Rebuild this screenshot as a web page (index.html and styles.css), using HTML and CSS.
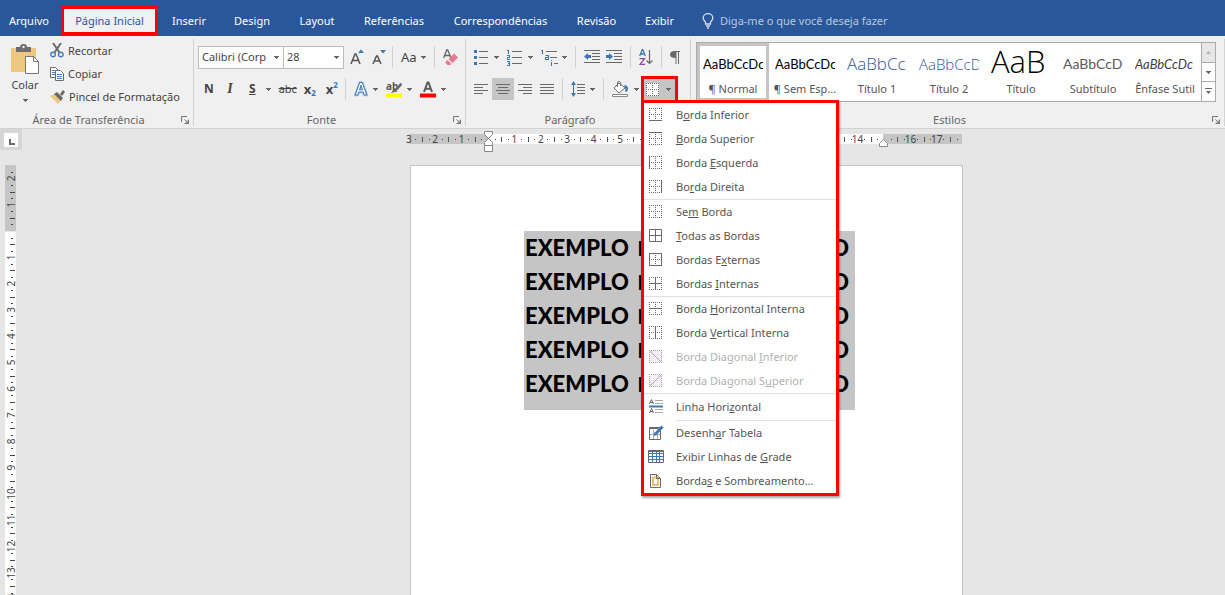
FILE: index.html
```html
<!DOCTYPE html>
<html lang="pt-BR">
<head>
<meta charset="utf-8">
<title>Documento</title>
<link rel="stylesheet" href="styles.css">
</head>
<body>
<svg class="defs" aria-hidden="true">
  <symbol id="caret" viewBox="0 0 5 3"><path d="M0 0h5v1h-1v1h-1v1h-1v-1h-1v-1h-1z"/></symbol>
  <symbol id="launcher" viewBox="0 0 9 9"><path d="M.5 6V.5H6M3.500 3.500l3 3" fill="none" stroke="#777"/><path d="M8 3v5H3l1.500-1.500h2V4.500z" fill="#777"/></symbol>
  <symbol id="dots" viewBox="0 0 13 13"><path d="M0 .5h13M0 6.500h13M0 12.500h13M.5 0v13M6.500 0v13M12.500 0v13" fill="none" stroke="#6a6a6a" stroke-dasharray="1 1"/></symbol>
  <symbol id="dotframe" viewBox="0 0 13 13"><path d="M0 0h13v13H0z" fill="#f5eef5" stroke="none"/><path d="M0 .5h13M0 12.500h13M.5 0v13M12.500 0v13" fill="none" stroke="#a8a0a8" stroke-dasharray="1 1"/></symbol>
</svg>

<nav class="tabs">
  <button class="tab file">Arquivo</button>
  <button class="tab active">Página Inicial</button>
  <button class="tab t-inserir">Inserir</button>
  <button class="tab t-design">Design</button>
  <button class="tab t-layout">Layout</button>
  <button class="tab t-ref">Referências</button>
  <button class="tab t-corr">Correspondências</button>
  <button class="tab t-rev">Revisão</button>
  <button class="tab t-exibir">Exibir</button>
  <label class="tell">
    <svg width="12" height="16" viewBox="0 0 12 16" fill="none" stroke="#d5deeb" stroke-width="1.300"><path d="M3.500 11V9.500C3.500 8.500 1.200 7.500 1.200 5a4.800 4.300 0 0 1 9.600 0c0 2.500-2.300 3.500-2.300 4.500V11zM4 13h4M5 15h2"/></svg>
    <input type="text" placeholder="Diga-me o que você deseja fazer" aria-label="Diga-me o que você deseja fazer">
  </label>
</nav>

<header class="ribbon">
  <section class="group clipboard">
    <div class="body">
      <button class="paste">
        <svg width="29" height="31" viewBox="0 0 29 31"><path d="M0 4h25v24H0z" fill="#edc87e"/><path d="M5 3h4q0-3 3.500-3T16 3h4v5H5z" fill="#6d6d6d"/><circle cx="12.500" cy="3" r="1.200" fill="#eee"/><path d="M14.500 12.500h8l5 5v12h-13z" fill="#fff" stroke="#777"/><path d="M22.500 12.500v5h5" fill="none" stroke="#777"/></svg>
        <span>Colar</span>
        <svg class="caret"><use href="#caret"/></svg>
      </button>
      <div class="cliplist">
        <button class="cmd"><svg width="14" height="15" viewBox="0 0 14 15" fill="none"><path d="M3 0l6.500 9.500M11 0L4.500 9.500" stroke="#6a6a6a" stroke-width="2"/><circle cx="3" cy="11.500" r="2.300" stroke="#4a7eb5" stroke-width="1.400"/><circle cx="10.800" cy="11.500" r="2.300" stroke="#4a7eb5" stroke-width="1.400"/></svg>Recortar</button>
        <button class="cmd"><svg width="14" height="14" viewBox="0 0 14 14"><path d="M.5.5h5l3 3v7h-8z" fill="#fff" stroke="#6a6a6a"/><path d="M2 3.500h3M2 5.500h3M2 7.500h3" stroke="#4a7eb5"/><path d="M5.500 3.500h5l3 3v7h-8z" fill="#fff" stroke="#6a6a6a"/><path d="M7 7.500h5M7 9.500h5M7 11.500h5" stroke="#4a7eb5"/></svg>Copiar</button>
        <button class="cmd"><svg width="15" height="14" viewBox="0 0 15 14"><path d="M0 6l5-2 6 6-3 4z" fill="#edc87e"/><path d="M4 4l3-2 6 6-2 3z" fill="#6a6a6a"/><path d="M10 4l3-4 2 2-3 4z" fill="#6a6a6a"/></svg>Pincel de Formatação</button>
      </div>
    </div>
    <footer><span>Área de Transferência</span><button class="launch" aria-label="Abrir Área de Transferência"><svg><use href="#launcher"/></svg></button></footer>
  </section>

  <section class="group font">
    <div class="body rows">
      <div class="row">
        <button class="combo name"><span>Calibri (Corp</span><svg class="caret"><use href="#caret"/></svg></button>
        <button class="combo size"><span>28</span><svg class="caret"><use href="#caret"/></svg></button>
        <button class="ico grow" aria-label="Aumentar fonte"><svg width="14" height="16" viewBox="0 0 14 16"><path d="M1 15L5 5h1l4 10M2.500 11.500h6" fill="none" stroke="#555" stroke-width="1.500"/><path d="M8 4l3-3.500L14 4z" fill="#3e78b4"/></svg></button>
        <button class="ico shrink" aria-label="Diminuir fonte"><svg width="14" height="16" viewBox="0 0 14 16"><path d="M1 15L4.500 7h1L9 15M2.500 12h5" fill="none" stroke="#555" stroke-width="1.500"/><path d="M8 1l3 3.500L14 1z" fill="#3e78b4"/></svg></button>
        <i class="rule"></i>
        <button class="ico case"><span>Aa</span><svg class="caret"><use href="#caret"/></svg></button>
        <i class="rule"></i>
        <button class="ico" aria-label="Limpar formatação"><svg width="15" height="16" viewBox="0 0 15 16"><path d="M.7 9L3.700 1h1L8 9M2 6.500h5" fill="none" stroke="#666" stroke-width="1.300"/><path d="M5.500 10L11 4.500l4 4L9.500 14z" fill="#e8798e"/><path d="M4.500 11l4 4-1 1H4.500L2 13.500z" fill="#e8798e"/></svg></button>
      </div>
      <div class="row second">
        <button class="ico bold">N</button>
        <button class="ico ital">I</button>
        <button class="ico under"><u>S</u><svg class="caret"><use href="#caret"/></svg></button>
        <button class="ico strike"><s>abc</s></button>
        <button class="ico bold scr">x<sub>2</sub></button>
        <button class="ico bold scr">x<sup>2</sup></button>
        <i class="rule"></i>
        <button class="ico fx" aria-label="Efeitos de texto"><svg width="14" height="16" viewBox="0 0 14 16"><path d="M1.200 14L5.700 1.500h2.600L12.800 14h-2.600l-1-3H4.800l-1 3zM5.500 8.800h3L7 4.300z" fill="#fff" stroke="#9fc3e8" stroke-width="2.400"/><path d="M1.200 14L5.700 1.500h2.600L12.800 14h-2.600l-1-3H4.800l-1 3zM5.500 8.800h3L7 4.300z" fill="#fff" stroke="#3e78b4"/></svg><svg class="caret"><use href="#caret"/></svg></button>
        <button class="ico mark" aria-label="Realce"><svg width="16" height="17" viewBox="0 0 16 17"><path d="M0 12.500h16v4H0z" fill="#ff0"/><text x="0" y="9" class="abtext">ab</text><path d="M15.500 2.500l-6 7" stroke="#6a6a6a" stroke-width="2.600"/><path d="M8 7.500l3.500 3L5 12z" fill="#6a6a6a"/></svg><svg class="caret"><use href="#caret"/></svg></button>
        <button class="ico color" aria-label="Cor da fonte"><svg width="16" height="17" viewBox="0 0 16 17"><path d="M0 12.500h16v4H0z" fill="red"/><path d="M4 11L7.500 1.500h1L12 11M5.500 7.800h5" fill="none" stroke="#5a5a5a" stroke-width="2"/></svg><svg class="caret"><use href="#caret"/></svg></button>
      </div>
    </div>
    <footer><span>Fonte</span><button class="launch" aria-label="Abrir Fonte"><svg><use href="#launcher"/></svg></button></footer>
  </section>

  <section class="group para">
    <div class="body rows">
      <div class="row lists">
        <button class="ico" aria-label="Marcadores"><svg width="14" height="15" viewBox="0 0 14 15"><path d="M0 0h3v3H0zM0 6h3v3H0zM0 12h3v3H0z" fill="#3e78b4"/><path d="M5 1.500h9M5 7.500h9M5 13.500h9" stroke="#6a6a6a"/></svg><svg class="caret"><use href="#caret"/></svg></button>
        <button class="ico" aria-label="Numeração"><svg width="15" height="17" viewBox="0 0 15 17"><path d="M0 1.500h1.500V5M0 6.500h2.500v2H.5v2H3M0 12.500h2.500v4H0M1 14.500h1.500" fill="none" stroke="#3e78b4" stroke-width="1.100"/><path d="M5 2.500h10M5 8.500h10M5 14.500h10" stroke="#6a6a6a"/></svg><svg class="caret"><use href="#caret"/></svg></button>
        <button class="ico multi" aria-label="Lista de vários níveis"><svg width="17" height="17" viewBox="0 0 17 17"><path d="M0 1.500h1.500V5M4.500 6.500h3v4h-3v-2h3M10.500 11v1M10.500 13v4" fill="none" stroke="#3e78b4" stroke-width="1.100"/><path d="M5 2.500h11M9 8.500h7M13 14.500h4" stroke="#6a6a6a"/></svg><svg class="caret"><use href="#caret"/></svg></button>
        <i class="rule"></i>
        <span class="indents">
          <button class="ico" aria-label="Diminuir recuo"><svg width="16" height="14" viewBox="0 0 16 14"><path d="M0 .5h16M8 3.500h8M8 6.500h8M8 9.500h8M0 12.500h16" stroke="#6a6a6a"/><path d="M4 3v2h3v3H4v2L0 6.500z" fill="#3e78b4"/></svg></button>
          <button class="ico" aria-label="Aumentar recuo"><svg width="16" height="14" viewBox="0 0 16 14"><path d="M0 .5h16M8 3.500h8M8 6.500h8M8 9.500h8M0 12.500h16" stroke="#6a6a6a"/><path d="M3 3v2H0v3h3v2l4-3.500z" fill="#3e78b4"/></svg></button>
        </span>
        <i class="rule"></i>
        <button class="ico" aria-label="Classificar"><svg width="14" height="17" viewBox="0 0 14 17" fill="none"><path d="M.7 7L3.200.7h.6L6.300 7M1.500 5h4" stroke="#3e78b4" stroke-width="1.300"/><path d="M.5 9.600h5L1 15.400h5" stroke="#8a48a8" stroke-width="1.300"/><path d="M10.500 1v13M7.500 11.500l3 3 3-3" stroke="#6a6a6a" stroke-width="1.200"/></svg></button>
        <i class="rule"></i>
        <button class="ico" aria-label="Mostrar tudo"><svg width="10" height="13" viewBox="0 0 10 13"><path d="M4.500 0H10v1H9v12H8V1H6.500v12h-1V7C2 7 0 6 0 3.500S2 0 4.500 0z" fill="#6a6a6a"/></svg></button>
      </div>
      <div class="row second aligns">
        <button class="ico al" aria-label="Esquerda"><svg width="14" height="11" viewBox="0 0 14 11"><path d="M0 .5h14M0 3.500h9M0 6.500h14M0 9.500h9" stroke="#6a6a6a"/></svg></button>
        <button class="ico al on" aria-label="Centralizar"><svg width="14" height="11" viewBox="0 0 14 11"><path d="M0 .5h14M2 3.500h10M0 6.500h14M2 9.500h10" stroke="#6a6a6a"/></svg></button>
        <button class="ico al" aria-label="Direita"><svg width="14" height="11" viewBox="0 0 14 11"><path d="M0 .5h14M5 3.500h9M0 6.500h14M5 9.500h9" stroke="#6a6a6a"/></svg></button>
        <button class="ico al" aria-label="Justificar"><svg width="14" height="11" viewBox="0 0 14 11"><path d="M0 .5h14M0 3.500h14M0 6.500h14M0 9.500h14" stroke="#6a6a6a"/></svg></button>
        <i class="rule"></i>
        <button class="ico spacing" aria-label="Espaçamento"><svg width="14" height="16" viewBox="0 0 14 16"><path d="M2.500 2v12" stroke="#3e78b4"/><path d="M0 4l2.500-4L5 4H3v2H2V4zM0 12l2.500 4L5 12H3v-2H2v2z" fill="#3e78b4"/><path d="M6 3.500h8M6 6.500h8M6 9.500h8M6 12.500h8" stroke="#6a6a6a"/></svg><svg class="caret"><use href="#caret"/></svg></button>
        <i class="rule"></i>
        <button class="ico shade" aria-label="Sombreamento"><svg width="17" height="16" viewBox="0 0 17 16"><path d="M.5 13.500h15v2H.500z" fill="#fff" stroke="#888"/><path d="M7 2l6 5-6 5-5-5z" fill="#fff" stroke="#6a6a6a"/><path d="M5.500 6V2q0-2 2-1.500t1 4.500" fill="none" stroke="#6a6a6a"/><path d="M12 4q4 0 4 3.500T13.500 11Q14 7 12 4z" fill="#3e78b4"/></svg><svg class="caret"><use href="#caret"/></svg></button>
        <div class="borders">
          <button class="bbtn" aria-label="Bordas"><svg width="13" height="13" class="bi"><rect width="13" height="13" fill="#fff"/><use href="#dots"/></svg><svg class="caret"><use href="#caret"/></svg></button>
          <div class="menu" role="menu">
            <button role="menuitem"><svg width="13" height="13"><use href="#dots"/><path d="M0 12.500h13"/></svg><span>B<u>o</u>rda Inferior</span></button>
            <button role="menuitem"><svg width="13" height="13"><use href="#dots"/><path d="M0 .5h13"/></svg><span><u>B</u>orda Superior</span></button>
            <button role="menuitem"><svg width="13" height="13"><use href="#dots"/><path d="M.5 0v13"/></svg><span>Borda <u>E</u>squerda</span></button>
            <button role="menuitem"><svg width="13" height="13"><use href="#dots"/><path d="M12.500 0v13"/></svg><span>Bo<u>r</u>da Direita</span></button>
            <hr>
            <button role="menuitem"><svg width="13" height="13"><use href="#dots"/></svg><span>Se<u>m</u> Borda</span></button>
            <button role="menuitem"><svg width="13" height="13"><path d="M.5.5h12v12H.5zM6.500 0v13M0 6.500h13"/></svg><span><u>T</u>odas as Bordas</span></button>
            <button role="menuitem"><svg width="13" height="13"><use href="#dots"/><path d="M.5.5h12v12H.5z"/></svg><span>Bordas E<u>x</u>ternas</span></button>
            <button role="menuitem"><svg width="13" height="13"><use href="#dots"/><path d="M6.500 0v13M0 6.500h13"/></svg><span>Bordas <u>I</u>nternas</span></button>
            <hr>
            <button role="menuitem"><svg width="13" height="13"><use href="#dots"/><path d="M0 6.500h13"/></svg><span>Borda <u>H</u>orizontal Interna</span></button>
            <button role="menuitem"><svg width="13" height="13"><use href="#dots"/><path d="M6.500 0v13"/></svg><span>Borda <u>V</u>ertical Interna</span></button>
            <button role="menuitem" disabled><svg width="13" height="13"><use href="#dotframe"/><path d="M1 1l11 11"/></svg><span>Borda Diagonal <u>I</u>nferior</span></button>
            <button role="menuitem" disabled><svg width="13" height="13"><use href="#dotframe"/><path d="M12 1L1 12"/></svg><span>Borda Diagonal S<u>u</u>perior</span></button>
            <hr>
            <button role="menuitem" class="line"><svg width="14" height="15" viewBox="0 0 14 15"><path d="M6 1.500h8M6 4.500h8M6 10.500h8M6 13.500h8" class="pale"/><path d="M.5 5L2.500.5 4.500 5M1 3.500h3M.5 14l2-4.500 2 4.500M1 12.500h3"/><path d="M0 7.500h14" class="blue2"/></svg><span>Linha Hori<u>z</u>ontal</span></button>
            <hr class="inset">
            <button role="menuitem"><svg width="15" height="15" viewBox="0 0 15 15"><path d="M.5 2.500h11v12H.5z" fill="#fff"/><path d="M4.500 5v9M1 9.500h10M8.500 5v9" class="pale"/><path d="M.5 3h9" class="gray2"/><path d="M13.500 1.500L7 8.500" class="blue3"/><path d="M4.500 11l1-4 3 3z" class="fillb"/></svg><span>Desenh<u>a</u>r Tabela</span></button>
            <button role="menuitem" class="wide"><svg width="16" height="13" viewBox="0 0 16 13"><path d="M1 3.500h14M1 6.500h14M1 9.500h14M4.500 2v10M8.500 2v10M11.500 2v10" class="blue"/><path d="M.5.5h15v12H.5zM0 1.500h16"/></svg><span>Exibir Linhas de <u>G</u>rade</span></button>
            <button role="menuitem"><svg width="13" height="14" viewBox="0 0 13 14"><path d="M1.500.5h6l4 4v9h-10z" fill="#fff"/><path d="M4 3.500h5v7.500H4z" class="tan"/><path d="M7.500.5v4h4"/></svg><span>Borda<u>s</u> e Sombreamento...</span></button>
          </div>
        </div>
      </div>
    </div>
    <footer><span>Parágrafo</span><button class="launch" aria-label="Abrir Parágrafo"><svg><use href="#launcher"/></svg></button></footer>
  </section>

  <section class="group styles">
    <div class="body gallery">
      <button class="style sel"><span class="pv">AaBbCcDc</span><span>¶ Normal</span></button>
      <button class="style"><span class="pv">AaBbCcDc</span><span>¶ Sem Esp...</span></button>
      <button class="style"><span class="pv h1">AaBbCc</span><span>Título 1</span></button>
      <button class="style"><span class="pv h2">AaBbCcD</span><span>Título 2</span></button>
      <button class="style"><span class="pv title">AaB</span><span>Título</span></button>
      <button class="style"><span class="pv subt">AaBbCcD</span><span>Subtítulo</span></button>
      <button class="style"><span class="pv emph">AaBbCcDc</span><span>Ênfase Sutil</span></button>
      <div class="scroll">
        <button class="off" aria-label="Acima"><svg class="caret up"><use href="#caret"/></svg></button>
        <button aria-label="Abaixo"><svg class="caret"><use href="#caret"/></svg></button>
        <button aria-label="Mais"><svg width="7" height="7" viewBox="0 0 7 7"><path d="M0 .5h7" stroke="#666"/><path d="M1 3h5L3.500 6z" fill="#666"/></svg></button>
      </div>
    </div>
    <footer><span>Estilos</span><button class="launch" aria-label="Abrir Estilos"><svg><use href="#launcher"/></svg></button></footer>
  </section>
</header>

<main class="work">
  <div class="corner"><button aria-label="Tabulação"><svg width="6" height="6" viewBox="0 0 6 6"><path d="M1 0v5h5" fill="none" stroke="#6a6a6a" stroke-width="2"/></svg></button></div>
  <div class="hruler"><svg id="hr" width="560" height="24"></svg></div>
  <div class="vruler"><svg id="vr" width="16" height="440"></svg></div>
  <article class="page">
    <div class="sel-text">
      <p>EXEMPLO <span>BORDAS NO</span> WORD</p>
      <p>EXEMPLO <span>BORDAS NO</span> WORD</p>
      <p>EXEMPLO <span>BORDAS NO</span> WORD</p>
      <p>EXEMPLO <span>BORDAS NO</span> WORD</p>
      <p>EXEMPLO <span>BORDAS NO</span> WORD</p>
    </div>
  </article>
</main>
<script src="rulers.js"></script>
</body>
</html>
```
FILE: styles.css
```css
* { box-sizing: border-box; }
body {
  margin: 0;
  min-height: 100vh;
  display: flex;
  flex-direction: column;
  background: #e6e6e6;
  color: #444;
  font: 11px/16px "Noto Sans", "Open Sans", sans-serif;
  overflow: hidden;
}
button, input { font: inherit; color: inherit; background: none; border: 0; padding: 0; margin: 0; }
button { white-space: nowrap; }
svg { display: block; flex: none; }
.defs { position: absolute; width: 0; height: 0; }
.caret { width: 5px; height: 3px; fill: #666; }

.tabs { display: flex; align-items: center; height: 36px; background: #2a579a; color: #fff; padding-top: 5px; }
.tab { height: 30px; text-align: center; }
.file { width: 58px; }
.active { width: 97px; height: 29px; margin-left: 3px; border: 3px solid #f00; background: #f0f0f0; color: #2a579a; }
.t-inserir { width: 62px; }
.t-design { width: 64px; }
.t-layout { width: 66px; }
.t-ref { width: 88px; }
.t-corr { width: 125px; }
.t-rev { width: 67px; }
.t-exibir { width: 59px; }
.tell { display: flex; align-items: center; gap: 6px; margin-left: 13px; flex: 1; }
.tell input { flex: 1; min-width: 0; }
.tell input::placeholder { color: #b9c8e0; opacity: 1; }

.ribbon { display: flex; height: 93px; background: #f0f0f0; border-bottom: 1px solid #d2d2d2; padding-top: 3px; }
.group { display: flex; flex-direction: column; border-right: 1px solid #d2d2d2; margin-bottom: 2px; flex: none; }
.body { flex: 1; display: flex; }
.group footer { display: flex; align-items: center; height: 12px; line-height: 12px; margin-top: auto; color: #666; }
.group footer span { flex: 1; text-align: center; padding-right: 4px; }
.launch { width: 9px; height: 9px; margin-right: 3px; }
.launch svg { width: 9px; height: 9px; }
.clipboard { width: 194px; }
.font { width: 272px; }
.para { width: 225px; }
.styles { flex: 1; min-width: 0; }

.paste { width: 50px; display: flex; flex-direction: column; align-items: center; justify-content: flex-start; padding-top: 5px; }
.paste span { margin-top: 2px; }
.paste .caret { margin-top: 6px; }
.cliplist { display: flex; flex-direction: column; }
.cmd { display: flex; align-items: center; gap: 4px; height: 23px; }

.rows { flex-direction: column; padding: 6px 4px 0 4px; gap: 9px; }
.row { display: flex; align-items: center; height: 24px; }
.second { height: 22px; }
.combo { display: flex; align-items: center; justify-content: space-between; flex: none; height: 23px; background: #fff; border: 1px solid #bbb; padding: 0 4px 0 3px; }
.name { width: 86px; }
.size { width: 60px; border-left: 0; }
.ico { display: flex; align-items: center; justify-content: center; gap: 6px; flex: none; }
.rule { width: 1px; height: 22px; background: #d2d2d2; flex: none; }
.grow { margin-left: 6px; }
.shrink { margin: 0 6px 0 8px; }
.case { margin: 0 8px; font-size: 13px; gap: 4px; }
.case + .rule { margin-right: 8px; }
.bold { font-weight: 700; width: 22px; font-size: 12px; }
.ital { font-family: "Liberation Serif", serif; font-style: italic; font-weight: 700; font-size: 14px; width: 20px; }
.under { font-weight: 700; font-size: 12px; margin: 0 8px 0 9px; gap: 10px; }
.strike { margin-right: 2px; }
.scr { gap: 0; font-size: 13px; }
.scr sub, .scr sup { font-size: 8px; color: #3e78b4; line-height: 8px; }
.scr sub { align-self: flex-end; }
.scr sup { align-self: flex-start; }
.scr + .rule { margin-left: 2px; }
.fx { margin: 0 8px; }
.fx, .mark, .color { gap: 5px; }
.mark { margin-right: 8px; }
.abtext { font: 700 10px "Noto Sans", sans-serif; fill: #555; }

.lists { gap: 8px; padding-left: 4px; }
.multi { gap: 4px; }
.indents { display: flex; gap: 6px; }
.al { width: 22px; height: 22px; }
.on { background: #c5c5c5; }
.aligns .rule { margin: 0 8px 0 4px; }
.spacing { gap: 5px; margin-right: 4px; }
.shade { gap: 5px; }
.borders { position: relative; margin-left: 2px; }
.bbtn { display: flex; align-items: center; gap: 7px; width: 37px; height: 27px; border: 3px solid #f00; background: #c5c5c5; padding-left: 2px; }
.menu {
  position: absolute; top: 24px; left: 0; z-index: 5;
  width: 198px; border: 3px solid #f00; background: #fff;
  box-shadow: 1px 2px 2px rgba(0,0,0,.35);
}
.menu button { display: grid; grid-template-columns: 27px 1fr; align-items: center; width: 100%; height: 24px; padding-left: 5px; color: #555; text-align: left; }
.menu svg { fill: none; stroke: #6a6a6a; }
.menu button:disabled { color: #b1b1b1; }
.menu button:disabled svg { stroke: #aaa; }
.menu hr { height: 1px; border: 0; margin: 0; background: #e1e1e1; }
.menu .line { height: 26px; }
.menu .inset { margin-left: 32px; }
.menu .wide { padding-left: 4px; grid-template-columns: 28px 1fr; }
.menu .pale { stroke: #aaa; }
.menu .blue { stroke: #3e78b4; }
.menu .blue2 { stroke: #3e78b4; stroke-width: 2; }
.menu .gray2 { stroke-width: 2; }
.menu .blue3 { stroke: #3e78b4; stroke-width: 3; }
.menu .fillb { fill: #3e78b4; stroke: none; }
.menu .tan { stroke: #e8bf70; stroke-width: 2; fill: #fff; }

.gallery { flex: none; height: 60px; margin: 3px 8px 0 5px; background: #fff; border: 1px solid #ababab; }
.style { flex: 1; min-width: 0; display: flex; flex-direction: column; justify-content: flex-end; align-items: center; padding: 0 5px 4px; color: #555; overflow: hidden; }
.style.sel { border: 3px solid #c5c5c5; padding: 0 2px 1px; }
.style .pv { width: 60px; height: 28px; line-height: 28px; overflow: hidden; color: #000; text-align: left; font-family: Lato, sans-serif; font-size: 13px; margin-bottom: 3px; }
.style .h1 { color: #2f5496; font: 300 17px/28px "Open Sans", sans-serif; }
.style .h2 { color: #2f5496; font: 300 15px/28px "Open Sans", sans-serif; }
.style .title { font: 300 31px/22px "Open Sans", sans-serif; }
.style .subt { color: #5a5a5a; font-size: 14px; }
.style .emph { color: #404040; font-style: italic; }
.scroll { width: 14px; display: flex; flex-direction: column; border-left: 1px solid #ababab; }
.scroll button { flex: 1; display: flex; align-items: center; justify-content: center; }
.scroll button + button { border-top: 1px solid #ababab; }
.scroll .off { background: #e6e6e6; }
.up { transform: rotate(180deg); fill: #bbb; }

.work { flex: 1; display: grid; grid-template-columns: 22px 1fr; grid-template-rows: 21px 1fr; min-height: 0; }
.corner { background: #d6d6d6; padding: 4px; }
.corner button { width: 14px; height: 14px; background: #fff; display: flex; align-items: center; justify-content: center; padding: 3px 0 0 1px; }
.hruler { padding-left: 384px; height: 36px; }
.vruler { padding-top: 15px; }
.page { width: 553px; margin: 15px 0 0 388px; background: #fff; border: 1px solid #c6c6c6; border-bottom: 0; padding: 65px 107px 0 113px; }
.sel-text { background: #c5c5c5; padding: 0 6px 9px 1px; }
.sel-text p { margin: 0; font: 900 22px/34px Lato, sans-serif; color: #000; white-space: nowrap; text-align-last: justify; }
.sel-text span { font-weight: 400; }
.tick { font: 10px "Noto Sans", sans-serif; fill: #444; text-anchor: middle; }
```
FILE: rulers.js
```js
const NS = "http://www.w3.org/2000/svg";
function add(svg, tag, attrs, text) {
  const e = document.createElementNS(NS, tag);
  for (const k in attrs) e.setAttribute(k, attrs[k]);
  if (text) e.textContent = text;
  svg.appendChild(e);
}
const CM_H = 26.4;
const CM_V = 26.3;

// Horizontal ruler: origin of the text area at x = 82
const h = document.getElementById("hr");
add(h, "rect", {x: 3, y: 5, width: 553, height: 10, fill: "#c5c5c5"});
add(h, "rect", {x: 82, y: 5, width: 395, height: 10, fill: "#fff"});
for (let q = -12; q <= 71; q++) {
  const x = 82 + q * CM_H / 4;
  if (q === 0 || q === 60) continue;
  if (q % 4 === 0) add(h, "text", {x: x, y: 14, class: "tick"}, String(Math.abs(q / 4)));
  else if (q % 2 === 0) add(h, "rect", {x: Math.round(x), y: 8, width: 1, height: 5, fill: "#555"});
  else add(h, "rect", {x: Math.round(x), y: 10, width: 1, height: 1, fill: "#444"});
}
add(h, "path", {d: "M78.500 2.500h8v3l-4 4 4 4v3h-8v-3l4-4-4-4zM78.500 16.500h8v6h-8z", fill: "#fff", stroke: "#888"});
add(h, "path", {d: "M473.500 17.500v-3l4-4 4 4v3z", fill: "#fff", stroke: "#888"});

// Vertical ruler: origin of the text area at y = 66
const v = document.getElementById("vr");
add(v, "rect", {x: 5, y: 0, width: 11, height: 66, fill: "#c5c5c5"});
add(v, "rect", {x: 5, y: 67, width: 11, height: 373, fill: "#fff"});
for (let q = -9; q <= 64; q++) {
  const y = 66 + q * CM_V / 4;
  if (q === 0) continue;
  if (q % 4 === 0) add(v, "text", {transform: "translate(15 " + y + ") rotate(-90)", class: "tick"}, String(Math.abs(q / 4)));
  else if (q % 2 === 0) add(v, "rect", {x: 10, y: Math.round(y), width: 5, height: 1, fill: "#444"});
  else add(v, "rect", {x: 11, y: Math.round(y), width: 2, height: 1, fill: "#444"});
}
```
